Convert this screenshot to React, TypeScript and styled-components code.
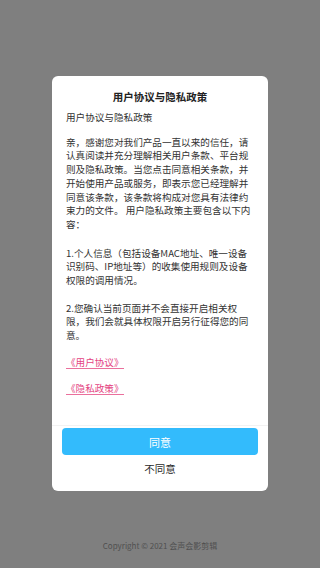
import React from 'react'
import styled, { createGlobalStyle } from 'styled-components'

const GlobalStyle = createGlobalStyle`
    html, body {
        margin: 0;
        padding: 0;
        background: #7f7f7f;
    }
    * {
        box-sizing: border-box;
    }
`

const FONT = `'Noto Sans CJK SC', 'Noto Sans', sans-serif`

export default function App() {
    return (
        <Page>
            <GlobalStyle />
            <Dialog>
                <Title>用户协议与隐私政策</Title>
                <Content>
                    <Subtitle>用户协议与隐私政策</Subtitle>
                    <Paragraph $gap={11}>
                        亲，感谢您对我们产品一直以来的信任，请认真阅读并充分理解相关用户条款、平台规则及隐私政策。当您点击同意相关条款，并开始使用产品或服务，即表示您已经理解并同意该条款，该条款将构成对您具有法律约束力的文件。
                        用户隐私政策主要包含以下内容：
                    </Paragraph>
                    <Paragraph $gap={15}>
                        1.个人信息（包括设备MAC地址、唯一设备识别码、IP地址等）的收集使用规则及设备权限的调用情况。
                    </Paragraph>
                    <Paragraph $gap={14}>
                        2.您确认当前页面并不会直接开启相关权限，我们会就具体权限开启另行征得您的同意。
                    </Paragraph>
                    <LinkRow $gap={13}>
                        <DocLink href="#">《用户协议》</DocLink>
                    </LinkRow>
                    <LinkRow $gap={12}>
                        <DocLink href="#">《隐私政策》</DocLink>
                    </LinkRow>
                </Content>
                <Actions>
                    <AgreeButton>同意</AgreeButton>
                    <DeclineButton>不同意</DeclineButton>
                </Actions>
            </Dialog>
            <Copyright>Copyright © 2021 会声会影剪辑</Copyright>
        </Page>
    )
}

const Page = styled.div`
    min-height: 100vh;
    display: flex;
    flex-direction: column;
    align-items: center;
    padding-top: 76px;
    font-family: ${FONT};
`

const Dialog = styled.div`
    width: 216px;
    height: 415px;
    background: #ffffff;
    border-radius: 6px;
    display: flex;
    flex-direction: column;
    overflow: hidden;
`

const Title = styled.div`
    padding-top: 14px;
    font-size: 10.5px;
    line-height: 14px;
    font-weight: 700;
    color: #222222;
    text-align: center;
`

const Content = styled.div`
    flex: 1;
    overflow: hidden;
    padding: 0 14px;
    font-size: 9.6px;
    line-height: 13.7px;
    color: #333333;
`

const Subtitle = styled.div`
    margin-top: 7px;
`

const Paragraph = styled.p<{ $gap: number }>`
    margin: ${(p) => p.$gap}px 0 0;
    word-break: break-all;
`

const LinkRow = styled.div<{ $gap: number }>`
    margin-top: ${(p) => p.$gap}px;
`

const DocLink = styled.a`
    display: inline-block;
    color: #e4437f;
    text-decoration: none;
    border-bottom: 1px solid #ea6f9c;
    line-height: 12.5px;
`

const Actions = styled.div`
    display: flex;
    flex-direction: column;
    align-items: stretch;
    border-top: 1px solid #f2f2f2;
    padding: 2px 10px 15px;
`

const AgreeButton = styled.button`
    height: 27px;
    border: none;
    border-radius: 4px;
    background: #33bbfc;
    color: #ffffff;
    font-family: ${FONT};
    font-size: 11px;
    padding: 0;
`

const DeclineButton = styled.button`
    margin-top: 7px;
    height: 14px;
    border: none;
    background: transparent;
    color: #2a2a2a;
    font-family: ${FONT};
    font-size: 10.5px;
    line-height: 14px;
    padding: 0;
`

const Copyright = styled.div`
    margin-top: auto;
    margin-bottom: 17px;
    font-size: 8px;
    line-height: 11px;
    color: #505050;
`
